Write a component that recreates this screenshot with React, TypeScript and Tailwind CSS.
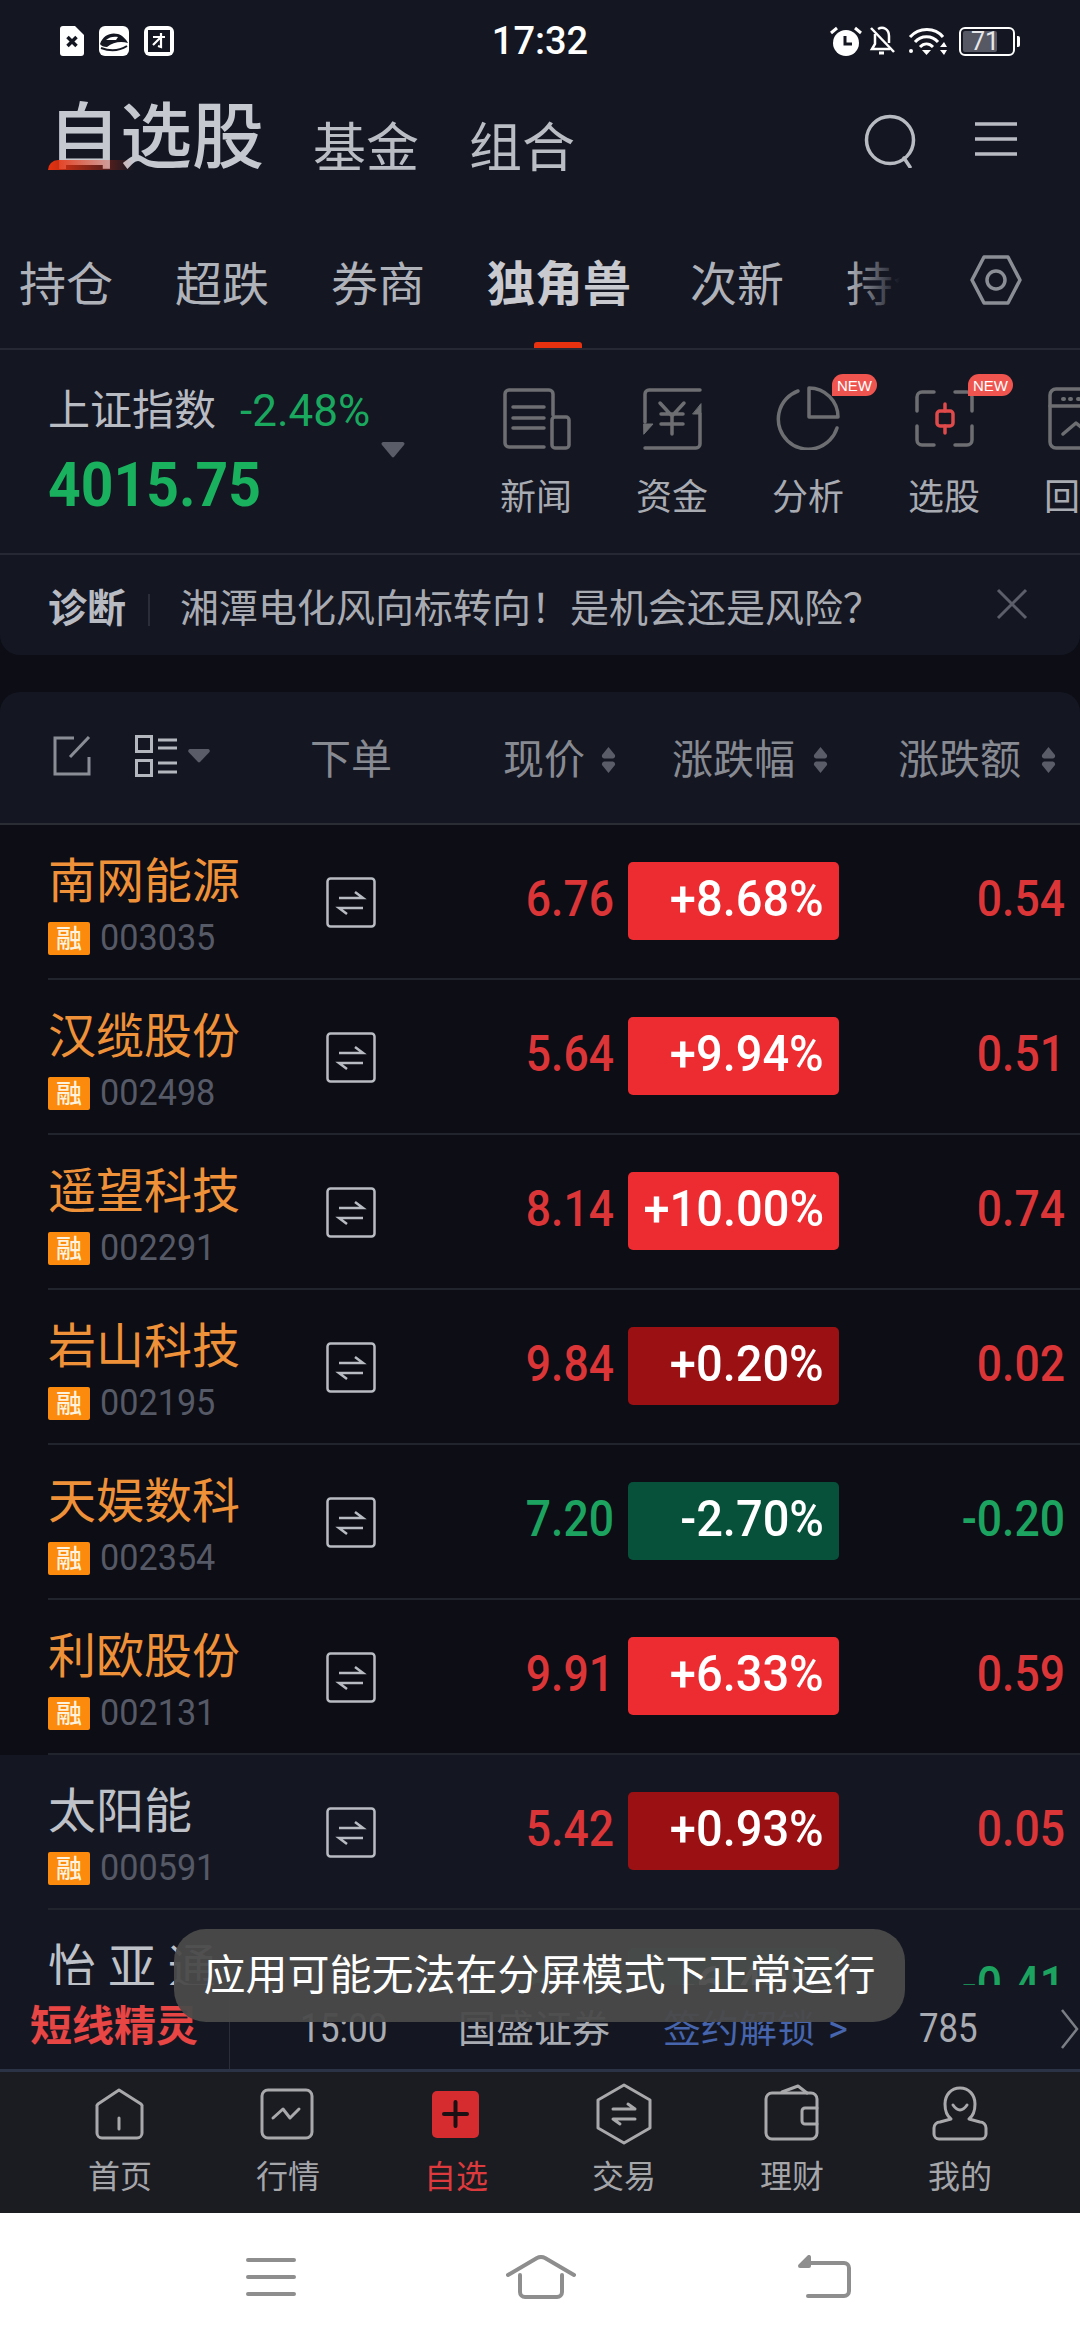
const stocks = [
  { name: "南网能源", code: "003035", price: "6.76", pct: "+8.68%", diff: "0.54", tone: "hot", star: true },
  { name: "汉缆股份", code: "002498", price: "5.64", pct: "+9.94%", diff: "0.51", tone: "hot", star: true },
  { name: "遥望科技", code: "002291", price: "8.14", pct: "+10.00%", diff: "0.74", tone: "hot", star: true },
  { name: "岩山科技", code: "002195", price: "9.84", pct: "+0.20%", diff: "0.02", tone: "warm", star: true },
  { name: "天娱数科", code: "002354", price: "7.20", pct: "-2.70%", diff: "-0.20", tone: "down", star: true },
  { name: "利欧股份", code: "002131", price: "9.91", pct: "+6.33%", diff: "0.59", tone: "hot", star: true },
  { name: "太阳能", code: "000591", price: "5.42", pct: "+0.93%", diff: "0.05", tone: "warm", star: false },
];

// the app's digits are condensed, Roboto squeezed a little is the closest installed
const num = "w-[226px] shrink-0 origin-right scale-x-[0.89] pb-[6px] text-right text-[50px] font-medium leading-none";
const priceCol = "w-[238px] shrink-0 origin-right scale-x-[0.89] pb-[6px] text-right text-[50px] font-medium leading-none";
const badgeBox = "ml-[14px] mb-[2px] flex h-[78px] w-[211px] shrink-0 items-center justify-end rounded-[5px] pr-[15px] pb-[4px] text-[50px] font-medium leading-none text-white";

const TradeIcon = () => (
  <svg width="50" height="51" viewBox="0 0 50 51" fill="none" stroke="#b9bbc2" strokeWidth="2.5" className="mt-[2px] shrink-0">
    <rect x="1.5" y="1.5" width="47" height="48" rx="3" />
    <path d="M13 21H37L29 15" />
    <path d="M37 31H13L21 37" />
  </svg>
);

const SortIcon = () => (
  <svg width="15" height="26" viewBox="0 0 15 26" fill="#5a5c68" className="shrink-0">
    <path d="M7.5 0L14 8a3 3 0 0 1-2 3.5H3A3 3 0 0 1 1 8Z" />
    <path d="M7.5 26L14 18a3 3 0 0 0-2-3.5H3A3 3 0 0 0 1 18Z" />
  </svg>
);

const Row = ({ stock }: { stock: (typeof stocks)[number] }) => {
  const isDown = stock.tone === "down";
  const badge = isDown ? "bg-[#07503a]" : stock.tone === "warm" ? "bg-[#9b1012]" : "bg-[#ec2c30]";
  const numColor = isDown ? "text-[#1ca35f]" : "text-[#dc3538]";
  return (
    <div className={`h-[155px] pl-[48px] ${stock.star ? "bg-[#0c0d15]" : "bg-[#141722]"}`}>
      <div className="flex h-full items-center border-b-2 border-[#22242d]">
        <div className="w-[278px] shrink-0 pt-[6px]">
          <div className={`text-[48px] leading-[56px] ${stock.star ? "text-[#ef9138]" : "text-[#bfc1c8]"}`}>
            {stock.name}
          </div>
          <div className="mt-[12px] flex items-center">
            <span className="flex h-[33px] w-[42px] items-center justify-center rounded-[2px] bg-[#fb8a0d] text-[26px] font-medium leading-none text-[#fff2dc]">
              融
            </span>
            <span className="ml-[10px] inline-block origin-left scale-x-[0.95] text-[36px] leading-[33px] text-[#565966]">
              {stock.code}
            </span>
          </div>
        </div>
        <TradeIcon />
        <div className={`${priceCol} ${numColor}`}>{stock.price}</div>
        <div className={`${badgeBox} ${badge}`}>
          <span className="inline-block origin-right scale-x-[0.94]">{stock.pct}</span>
        </div>
        <div className={`${num} ${numColor}`}>{stock.diff}</div>
      </div>
    </div>
  );
};

const NavItem = ({ label, active, children }: { label: string; active?: boolean; children: React.ReactNode }) => (
  <div className="flex w-[168px] flex-col items-center">
    <svg width="66" height="64" viewBox="0 0 66 64" fill="none" stroke="#a9a9ab" strokeWidth="3" strokeLinecap="round" strokeLinejoin="round">
      {children}
    </svg>
    <span className={`mt-[8px] text-[32px] leading-[44px] ${active ? "text-[#dc3a3c]" : "text-[#a5a6aa]"}`}>{label}</span>
  </div>
);

const Shortcut = ({ label, isNew, children }: { label: string; isNew?: boolean; children: React.ReactNode }) => (
  <div className="relative flex w-[136px] shrink-0 flex-col items-center pt-[36px]">
    {isNew && (
      <span className="absolute left-[92px] top-[24px] flex h-[22px] w-[45px] items-center justify-center rounded-t-[11px] rounded-br-[11px] bg-[#f0544f] text-[15px] leading-none text-white font-['Liberation_Sans',sans-serif]">
        NEW
      </span>
    )}
    <svg width="72" height="64" viewBox="0 0 72 64" fill="none" stroke="#6d6e72" strokeWidth="3.5" strokeLinecap="round" strokeLinejoin="round">
      {children}
    </svg>
    <span className="mt-[28px] whitespace-nowrap text-[36px] leading-[40px] text-[#a9abb2]">{label}</span>
  </div>
);

export default function App() {
  return (
    <div className="relative h-[2340px] w-[1080px] overflow-hidden bg-[#0c0d15] font-['Roboto','Noto_Sans_CJK_SC',sans-serif]">
      <div className="bg-[#141722]">
        {/* status bar */}
        <div className="flex h-[84px] items-center justify-between pl-[60px] pr-[60px] pb-[2px]">
          <div className="flex w-[400px] items-center gap-[15px]">
            <svg width="24" height="30" viewBox="0 0 24 30">
              <path d="M3 0H15L24 9V27a3 3 0 0 1-3 3H3a3 3 0 0 1-3-3V3a3 3 0 0 1 3-3Z" fill="#fff" />
              <path d="M7.5 11L16.5 20M16.5 11L7.5 20" stroke="#141722" strokeWidth="3.5" />
            </svg>
            <svg width="30" height="30" viewBox="0 0 30 30">
              <rect width="30" height="30" rx="6" fill="#fff" />
              <path d="M1 18C4 9 12 6 19 8C23 9 27 13 29 17C22 15 14 16 8 21C5 21 2 20 1 18Z" fill="#141722" />
              <path d="M7 14C10 11 15 10 19 11L17 14Z" fill="#fff" />
              <path d="M2 22C10 25 20 25 28 20" stroke="#141722" strokeWidth="2" fill="none" />
            </svg>
            <svg width="30" height="30" viewBox="0 0 30 30">
              <rect width="30" height="30" rx="6" fill="#fff" />
              <rect x="4" y="4" width="22" height="22" fill="#141722" />
              <path d="M9 11H21M17 7V21L14 20M16 12L9 19" stroke="#fff" strokeWidth="2.2" fill="none" />
            </svg>
          </div>
          <span className="text-[38px] font-medium leading-none text-white">17:32</span>
          <div className="flex w-[400px] items-center justify-end">
            <svg width="32" height="30" viewBox="0 0 32 30" fill="#fff">
              <circle cx="16" cy="17" r="13" />
              <path d="M15 10V18H22" stroke="#141722" strokeWidth="3" fill="none" />
              <path d="M1 7L7 2M31 7L25 2" stroke="#fff" strokeWidth="3" />
            </svg>
            <svg width="27" height="30" viewBox="0 0 27 30" fill="none" stroke="#fff" strokeWidth="2.5" className="ml-[7px]">
              <path d="M6 8V18L3 23H21M9 3C14 0 20 3 20 10V17" />
              <path d="M2 2L25 26" />
              <path d="M10 27H15" strokeWidth="3" />
            </svg>
            <svg width="42" height="30" viewBox="0 0 42 30" fill="none" stroke="#fff" strokeWidth="3" className="ml-[9px]">
              <path d="M5 11C14 1 30 1 38 11" />
              <path d="M10 16C16 9 27 9 33 16" />
              <path d="M15 21C19 17 24 17 28 21" />
              <path d="M17 24H26L21.5 29Z" fill="#fff" stroke="none" />
              <path d="M35 21L39 16L42 21ZM35 24H42L39 29Z" fill="#fff" stroke="none" />
              <circle cx="6" cy="25" r="2" fill="#fff" stroke="none" />
            </svg>
            <div className="relative ml-[12px] flex h-[29px] w-[56px] items-center rounded-[6px] border-[2.5px] border-white p-[2px]">
              <div className="h-full w-[71%] rounded-[2px] bg-[#565864]" />
              <span className="absolute left-[10px] text-[25px] leading-none text-[#e8e8ea]">71</span>
            </div>
            <div className="ml-[2px] h-[11px] w-[3px] rounded-r-[2px] bg-white" />
          </div>
        </div>

        {/* title */}
        <div className="relative flex h-[106px] items-end pb-[10px] pl-[48px] pr-[62px]">
          <span className="relative text-[72px] font-medium leading-[84px] text-[#c6c8d0]">自选股</span>
          <span className="absolute left-[48px] top-[76px] h-[10px] w-[86px] rounded-tl-[10px] bg-gradient-to-r from-[#e8320f] to-transparent" />
          <span className="ml-[49px] text-[53px] leading-[62px] text-[#bbbdc5]">基金</span>
          <span className="ml-[50px] text-[53px] leading-[62px] text-[#bbbdc5]">组合</span>
          <svg width="54" height="54" viewBox="0 0 54 54" fill="none" stroke="#b9bbc2" strokeWidth="3.5" className="ml-auto mb-[12px]">
            <circle cx="26" cy="26" r="23.5" />
            <path d="M40 44L46 53" strokeLinecap="round" />
          </svg>
          <svg width="44" height="34" viewBox="0 0 44 34" stroke="#b9bbc2" strokeWidth="3.5" className="mb-[24px] ml-[56px]">
            <path d="M1 2H43M1 17H43M1 32H43" />
          </svg>
        </div>

        {/* tabs */}
        <div className="flex h-[160px] items-center border-b-2 border-[#262933] pt-[32px]">
          <div className="relative w-[900px] shrink-0 overflow-hidden pl-[19px]">
            <div className="flex gap-[62px] whitespace-nowrap text-[47px] leading-[60px] text-[#b0b2ba]">
              <span>持仓</span>
              <span>超跌</span>
              <span>券商</span>
              <span className="text-[48px] font-bold text-[#c8cad0]">独角兽</span>
              <span className="ml-[-3px]">次新</span>
              <span>持仓</span>
            </div>
            <div className="absolute right-0 top-0 h-full w-[52px] bg-gradient-to-r from-transparent to-[#141722]" />
          </div>
          <svg width="52" height="50" viewBox="0 0 52 50" fill="none" stroke="#8c8e96" strokeWidth="3.5" strokeLinejoin="round" className="mb-[10px] ml-[70px]">
            <path d="M14 2H38L50 25L38 48H14L2 25Z" />
            <circle cx="26" cy="25" r="9" />
          </svg>
        </div>
      </div>

      {/* index + shortcuts */}
      <div className="relative rounded-b-[20px] bg-[#141722]">
        <span className="absolute left-[534px] top-[-8px] h-[6px] w-[48px] rounded-t-[3px] bg-[#e8320f]" />
        <div className="flex h-[205px] overflow-hidden border-b-2 border-[#262933]">
          <div className="relative w-[468px] shrink-0 pl-[48px] pt-[36px]">
            <div className="flex items-center whitespace-nowrap">
              <span className="text-[42px] leading-[50px] text-[#b9bbc2]">上证指数</span>
              <span className="ml-[24px] text-[44px] leading-[50px] text-[#1aa85f]">-2.48%</span>
            </div>
            <div className="mt-[16px] origin-left scale-x-[0.92] text-[62px] font-bold leading-[66px] text-[#19b05e]">4015.75</div>
            <svg width="24" height="16" viewBox="0 0 24 16" fill="#5a5c68" className="absolute left-[381px] top-[92px]">
              <path d="M2 0H22a2 2 0 0 1 1 3L13 15a1.500 1.500 0 0 1-2 0L1 3a2 2 0 0 1 1-3Z" />
            </svg>
          </div>
          <Shortcut label="新闻">
            <path d="M53 29V8a4 4 0 0 0-4-4H9a4 4 0 0 0-4 4V57a4 4 0 0 0 4 4H44" />
            <path d="M13 21H44M13 32H44M13 42H44" />
            <rect x="52" y="31" width="17" height="31" rx="3" />
          </Shortcut>
          <Shortcut label="资金">
            <path d="M64 4H13a4 4 0 0 0-4 4V36" />
            <path d="M9 62H60a4 4 0 0 0 4-4V28" />
            <path d="M8 38L17 38L8 48ZM65 18L65 28L57 28Z" fill="#6d6e72" strokeWidth="1" />
            <path d="M24 17L36 30L48 17M25 28H47M25 38H47M36 30V48" />
          </Shortcut>
          <Shortcut label="分析" isNew>
            <path d="M37 2V31H66A29 29 0 0 0 37 2Z" />
            <path d="M26 5A30 30 0 1 0 65 42" />
          </Shortcut>
          <Shortcut label="选股" isNew>
            <path d="M26 6H14a5 5 0 0 0-5 5V25M47 6H59a5 5 0 0 1 5 5V25M9 40V54a5 5 0 0 0 5 5H26M47 59H59a5 5 0 0 0 5-5V40" />
            <path d="M37 18V25M37 40V47" stroke="#e04a4a" />
            <rect x="29" y="25" width="16" height="15" rx="3" stroke="#e04a4a" />
          </Shortcut>
          <Shortcut label="回测">
            <rect x="6" y="3" width="60" height="59" rx="6" />
            <path d="M6 20H66" />
            <path d="M19 13H20M26 13H27M34 13H35" strokeWidth="4" />
            <path d="M19 48L32 37L44 47" />
          </Shortcut>
        </div>
        <div className="flex h-[100px] items-center pt-[9px] pl-[48px]">
          <span className="text-[39px] font-bold leading-none text-[#b9bbc2]">诊断</span>
          <span className="ml-[22px] h-[32px] w-[2px] bg-[#2b2e38]" />
          <span className="ml-[30px] whitespace-nowrap text-[39px] leading-none text-[#a9abb2]">湘潭电化风向标转向！是机会还是风险？</span>
          <svg width="32" height="32" viewBox="0 0 32 32" stroke="#5c5e6a" strokeWidth="3" className="ml-auto mb-[12px] mr-[52px]">
            <path d="M2 2L30 30M30 2L2 30" />
          </svg>
        </div>
      </div>

      {/* stock table */}
      <div className="mt-[37px] overflow-hidden rounded-t-[20px] bg-[#141722]">
        <div className="flex h-[133px] items-center border-b-2 border-[#2b2d34] pt-[5px] text-[41px] leading-none text-[#888a92]">
          <div className="flex w-[310px] shrink-0 items-center pl-[53px]">
            <svg width="38" height="40" viewBox="0 0 38 40" fill="none" stroke="#8b8d96" strokeWidth="3" className="mb-[8px]">
              <path d="M21 2H2V38H36V21" />
              <path d="M17 21L36 1" stroke="#8b8d96" strokeWidth="3" />
            </svg>
            <svg width="42" height="42" viewBox="0 0 42 42" fill="none" stroke="#b5b7be" strokeWidth="3" className="mb-[8px] ml-[44px]">
              <rect x="1.500" y="1.500" width="15" height="15" />
              <rect x="1.500" y="25.500" width="15" height="15" />
              <path d="M23 5H42M23 13H42M23 28H42M23 37H42" />
            </svg>
            <svg width="22" height="14" viewBox="0 0 22 14" fill="#5a5c68" className="mb-[8px] ml-[11px]">
              <path d="M2 0H20a2 2 0 0 1 1.500 3L12 13a1.500 1.500 0 0 1-2 0L.5 3A2 2 0 0 1 2 0Z" />
            </svg>
          </div>
          <div className="w-[193px] shrink-0">下单</div>
          <div className="flex w-[169px] shrink-0 items-center gap-[16px]">
            现价
            <SortIcon />
          </div>
          <div className="flex w-[226px] shrink-0 items-center gap-[18px]">
            涨跌幅
            <SortIcon />
          </div>
          <div className="flex shrink-0 items-center gap-[20px]">
            涨跌额
            <SortIcon />
          </div>
        </div>
        <div className="h-[1160px] overflow-hidden">
          {stocks.map((s) => (
            <Row key={s.code} stock={s} />
          ))}
          <div className="flex h-[155px] items-center bg-[#141722] pl-[48px]">
            <div className="w-[278px] shrink-0 pb-[40px]">
              <div className="text-[48px] leading-[56px] tracking-[12px] text-[#bfc1c8]">怡亚通</div>
            </div>
            <div className="w-[50px] shrink-0" />
            <div className={`${priceCol} text-[#1ca35f]`}>5.91</div>
            <div className={`${badgeBox} bg-[#07503a]`}>
              <span className="inline-block origin-right scale-x-[0.94]">-6.49%</span>
            </div>
            <div className={`${num} text-[#1ca35f]`}>-0.41</div>
          </div>
        </div>
      </div>

      {/* ticker */}
      <div className="flex h-[87px] items-center whitespace-nowrap border-b-[3px] border-[#2b3346] bg-[#141722] pt-[3px] text-[38px] leading-none text-[#a9abb2]">
        <span className="w-[229px] shrink-0 pb-[3px] pl-[30px] text-[42px] font-bold text-[#e84545]">短线精灵</span>
        <span className="h-full w-[1px] shrink-0 bg-[#2b2e38]" />
        <span className="ml-[70px] inline-block w-[86px] shrink-0 origin-left scale-x-[0.88] text-[40px]">15:00</span>
        <span className="ml-[72px] shrink-0">国盛证券</span>
        <span className="ml-[53px] shrink-0 text-[#4665ad]">签约解锁</span>
        <span className="ml-[13px] w-[22px] shrink-0 text-[#4665ad]">&gt;</span>
        <span className="ml-[69px] inline-block w-[58px] shrink-0 origin-left scale-x-[0.87] text-[40px]">785</span>
        <svg width="18" height="40" viewBox="0 0 18 40" fill="none" stroke="#7c7e86" strokeWidth="2.500" className="ml-[84px] shrink-0">
          <path d="M1 1L16 20L1 39" />
        </svg>
      </div>

      {/* bottom nav */}
      <div className="flex h-[141px] bg-[#1b1c22] pl-[36px] pt-[11px]">
        <NavItem label="首页">
          <path d="M32 7L54 21a3 3 0 0 1 1 3V50a5 5 0 0 1-5 5H15a5 5 0 0 1-5-5V24a3 3 0 0 1 1-3Z" />
          <path d="M32 35V46" />
        </NavItem>
        <NavItem label="行情">
          <rect x="7" y="7" width="50" height="48" rx="6" />
          <path d="M18 35L28 26L35 35L44 26" />
        </NavItem>
        <NavItem label="自选" active>
          <rect x="9" y="8" width="47" height="47" rx="5" fill="#d62c2f" stroke="none" />
          <path d="M21 31H44M32.500 19V43" stroke="#1b1013" strokeWidth="4" />
        </NavItem>
        <NavItem label="交易">
          <path d="M33 2L59 17V45L33 60L7 45V17Z" />
          <path d="M22 26H44L37 21M44 36H22L29 41" />
        </NavItem>
        <NavItem label="理财">
          <rect x="7" y="10" width="51" height="46" rx="6" />
          <path d="M23 9L39 3L48 10" />
          <path d="M58 25H46a3 3 0 0 0-3 3V38a3 3 0 0 0 3 3H58" />
        </NavItem>
        <NavItem label="我的">
          <path d="M33 5c-9 0-15 7-15 16c0 7 2 12 6 15L13 39a6 6 0 0 0-6 6v6a5 5 0 0 0 5 5H54a5 5 0 0 0 5-5v-6a6 6 0 0 0-6-6L42 36c4-3 6-8 6-15c0-9-6-16-15-16Z" />
          <path d="M26 22q7 10 14 0" />
        </NavItem>
      </div>

      {/* system nav */}
      <div className="flex h-[127px] items-center bg-white pl-[246px]">
        <svg width="50" height="40" viewBox="0 0 50 40" stroke="#8e8e8e" strokeWidth="4" strokeLinecap="round">
          <path d="M2 3H48M2 20H48M2 37H48" />
        </svg>
        <svg width="70" height="44" viewBox="0 0 70 44" fill="none" stroke="#8e8e8e" strokeWidth="4" strokeLinecap="round" strokeLinejoin="round" className="ml-[210px]">
          <path d="M2 20L31 3Q35 1 39 3L68 20" />
          <path d="M14 20V37a5 5 0 0 0 5 5H51a5 5 0 0 0 5-5V20" />
        </svg>
        <svg width="54" height="44" viewBox="0 0 54 44" fill="none" stroke="#8e8e8e" strokeWidth="4" strokeLinecap="round" strokeLinejoin="round" className="ml-[222px]">
          <path d="M10 8H46a5 5 0 0 1 5 5V36a5 5 0 0 1-5 5H10" />
          <path d="M2 11L11 2V11Z" fill="#8e8e8e" />
        </svg>
      </div>

      {/* split-screen toast */}
      <div className="absolute left-[174px] top-[1929px] flex h-[93px] w-[731px] items-center justify-center rounded-[32px] bg-[#4a4a4a]/95 text-[42px] leading-none text-white">
        应用可能无法在分屏模式下正常运行
      </div>
    </div>
  );
}
